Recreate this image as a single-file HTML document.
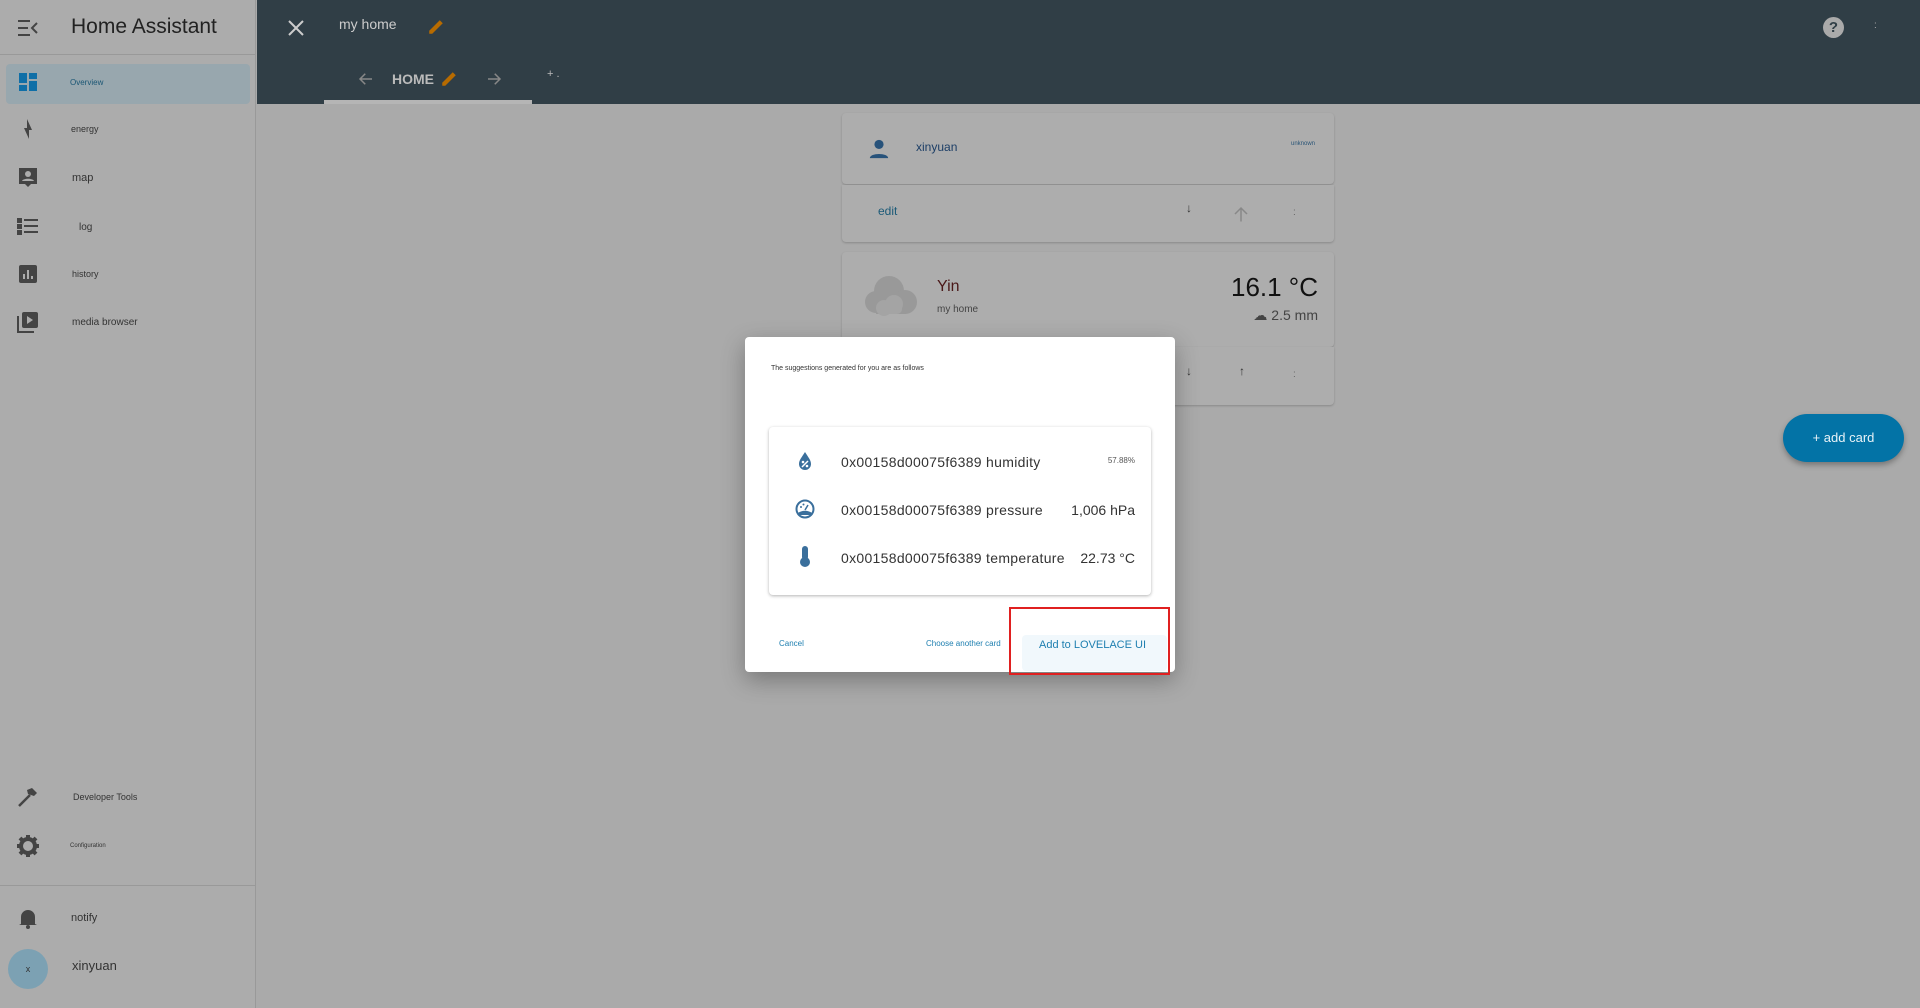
<!DOCTYPE html>
<html><head><meta charset="utf-8"><style>
*{box-sizing:border-box;margin:0;padding:0}
body{width:1920px;height:1008px;overflow:hidden;background:#aaaaaa;font-family:"Liberation Sans",sans-serif;position:relative}
.abs{position:absolute}
#side{left:0;top:0;width:256px;height:1008px;background:#acacac;border-right:1px solid #999}
.item{position:absolute;left:0;width:256px;height:48px;display:flex;align-items:center}
.item svg{position:absolute;left:16px}
.item span{position:absolute;left:72px;color:#333}
#top{left:257px;top:0;width:1663px;height:104px;background:#303e46}
.card{position:absolute;left:842px;width:492px;background:#adadad;border-radius:4px;box-shadow:0 1px 2px rgba(0,0,0,.2)}
</style></head><body>
<div id="side" class="abs">
  <svg class="abs" style="left:16px;top:18px" width="24" height="20" viewBox="0 0 24 20"><path d="M2 3h12M2 10h10M2 17h12" stroke="#444" stroke-width="2"/><path d="M21 5l-5 5 5 5" stroke="#444" stroke-width="2" fill="none"/></svg>
  <div class="abs" style="left:71px;top:15px;font-size:21px;color:#222">Home Assistant</div>
  <div class="abs" style="left:0;top:54px;width:256px;border-top:1px solid #999"></div>
  <div class="abs" style="left:6px;top:64px;width:244px;height:40px;background:#98a7ae;border-radius:4px"></div>
  <div class="item" style="top:58px"><svg width="24" height="24" viewBox="0 0 24 24" style="left:16px"><path d="M3 3h8v10H3zM13 3h8v6h-8zM13 11h8v10h-8zM3 15h8v6H3z" fill="#0f6fa7"/></svg><span style="font-size:8px;color:#1a5674;left:70px">Overview</span></div>
  <div class="item" style="top:105px"><svg width="24" height="24" viewBox="0 0 24 24"><path d="M11 2v9H8l5 11v-9h3z" fill="#444"/></svg><span style="font-size:9px;left:71px">energy</span></div>
  <div class="item" style="top:154px"><svg width="24" height="24" viewBox="0 0 24 24"><path d="M3 2h18v16h-6l-3 3-3-3H3z" fill="#444"/><circle cx="12" cy="8" r="3" fill="#acacac"/><path d="M6 15c1-3 11-3 12 0z" fill="#acacac"/></svg><span style="font-size:11px;left:72px">map</span></div>
  <div class="item" style="top:203px"><svg width="24" height="24" viewBox="0 0 24 24"><path d="M2 4h3v3H2zM2 10h3v3H2zM2 16h3v3H2zM8 5h14M8 11h14M8 17h14" stroke="#444" stroke-width="2" fill="#444"/></svg><span style="font-size:10px;left:79px">log</span></div>
  <div class="item" style="top:250px"><svg width="24" height="24" viewBox="0 0 24 24"><rect x="3" y="3" width="18" height="18" rx="2" fill="#444"/><path d="M8 17v-5M12 17V8M16 17v-3" stroke="#acacac" stroke-width="2"/></svg><span style="font-size:9px;left:72px">history</span></div>
  <div class="item" style="top:298px"><svg width="24" height="24" viewBox="0 0 24 24"><path d="M2 6v16h16" stroke="#444" stroke-width="2" fill="none"/><rect x="6" y="2" width="16" height="16" rx="2" fill="#444"/><path d="M11 6l6 4-6 4z" fill="#acacac"/></svg><span style="font-size:10px;left:72px">media browser</span></div>
  <div class="item" style="top:773px"><svg width="24" height="24" viewBox="0 0 24 24"><path d="M3 21L14 10" stroke="#444" stroke-width="2.5"/><path d="M11 5l5-2 5 5-3 3-3-1-3-1z" fill="#444"/></svg><span style="font-size:9px;left:73px">Developer Tools</span></div>
  <div class="item" style="top:822px"><svg width="24" height="24" viewBox="0 0 24 24"><circle cx="12" cy="12" r="7" fill="none" stroke="#444" stroke-width="4"/><path d="M12 1v5M12 18v5M1 12h5M18 12h5M4 4l4 4M16 16l4 4M4 20l4-4M16 8l4-4" stroke="#444" stroke-width="4"/></svg><span style="font-size:6px;left:70px">Configuration</span></div>
  <div class="abs" style="left:0;top:885px;width:256px;border-top:1px solid #999"></div>
  <div class="item" style="top:894px"><svg width="24" height="24" viewBox="0 0 24 24"><path d="M5 18V11a7 7 0 0114 0v7l2 1H3z" fill="#444"/><circle cx="12" cy="21" r="2" fill="#444"/></svg><span style="font-size:11px;left:71px">notify</span></div>
  <div class="abs" style="left:8px;top:949px;width:40px;height:40px;border-radius:50%;background:#7ca1b3;text-align:center;line-height:40px;font-size:9px;color:#333">x</div>
  <div class="abs" style="left:72px;top:958px;font-size:13px;color:#333">xinyuan</div>
</div>
<div id="top" class="abs">
  <svg class="abs" style="left:31px;top:20px" width="16" height="16" viewBox="0 0 16 16"><path d="M1 1l14 14M15 1L1 15" stroke="#ccc" stroke-width="2"/></svg>
  <div class="abs" style="left:82px;top:16px;font-size:14px;color:#ccc">my home</div>
  <svg class="abs" style="left:170px;top:18px" width="18" height="18" viewBox="0 0 24 24"><path d="M3 21v-4L17 3l4 4L7 21z" fill="#b76b00"/></svg>
  <div class="abs" style="left:67px;top:100px;width:208px;height:4px;background:#b5b5b5"></div>
  <svg class="abs" style="left:100px;top:70px" width="18" height="18" viewBox="0 0 24 24"><path d="M20 12H4M11 5l-7 7 7 7" stroke="#888" stroke-width="2" fill="none"/></svg>
  <div class="abs" style="left:135px;top:71px;font-size:14px;font-weight:bold;color:#bbb">HOME</div>
  <svg class="abs" style="left:183px;top:70px" width="18" height="18" viewBox="0 0 24 24"><path d="M3 21v-4L17 3l4 4L7 21z" fill="#b76b00"/></svg>
  <svg class="abs" style="left:228px;top:70px" width="18" height="18" viewBox="0 0 24 24"><path d="M4 12h16M13 5l7 7-7 7" stroke="#888" stroke-width="2" fill="none"/></svg>
  <div class="abs" style="left:290px;top:68px;font-size:11px;color:#bbb">+ .</div>
  <div class="abs" style="left:1566px;top:17px;width:21px;height:21px;border-radius:50%;background:#aaa;color:#303e46;font-weight:bold;font-size:15px;text-align:center;line-height:21px">?</div>
  <div class="abs" style="left:1617px;top:20px;font-size:10px;color:#aaa">:</div>
</div>
<div class="card" style="top:113px;height:71px">
  <svg class="abs" style="left:26px;top:25px" width="22" height="22" viewBox="0 0 24 24"><circle cx="12" cy="7" r="5" fill="#27527a"/><path d="M2 22c0-6 20-6 20 0z" fill="#27527a"/></svg>
  <div class="abs" style="left:74px;top:27px;font-size:12px;color:#1c3e66">xinyuan</div>
  <div class="abs" style="left:449px;top:28px;font-size:6px;color:#2a5577">unknown</div>
</div>
<div class="card" style="top:185px;height:57px;border-radius:0 0 4px 4px">
  <div class="abs" style="left:36px;top:19px;font-size:12px;color:#1b5a78">edit</div>
  <div class="abs" style="left:344px;top:16px;font-size:12px;color:#333">↓</div>
  <svg class="abs" style="left:390px;top:20px" width="18" height="18" viewBox="0 0 24 24"><path d="M12 22V4M4 12l8-8 8 8" stroke="#888" stroke-width="2" fill="none"/></svg>
  <div class="abs" style="left:451px;top:22px;font-size:10px;color:#666">:</div>
</div>
<div class="card" style="top:252px;height:95px">
  <svg class="abs" style="left:22px;top:20px" width="54" height="46" viewBox="0 0 54 46"><circle cx="25" cy="19" r="15" fill="#999"/><circle cx="12" cy="30" r="11" fill="#999"/><circle cx="41" cy="30" r="12" fill="#999"/><rect x="12" y="28" width="30" height="14" fill="#999"/><circle cx="20" cy="36" r="8" fill="#a4a4a4"/><circle cx="30" cy="32" r="9" fill="#a4a4a4"/><rect x="14" y="32" width="24" height="10" rx="5" fill="#a4a4a4"/></svg>
  <div class="abs" style="left:95px;top:26px;font-size:16px;color:#4a1818">Yin</div>
  <div class="abs" style="left:95px;top:52px;font-size:10px;color:#444">my home</div>
  <div class="abs" style="right:16px;top:20px;font-size:26px;color:#111">16.1 °C</div>
  <div class="abs" style="right:16px;top:55px;font-size:14px;color:#444">&#9729; 2.5 mm</div>
</div>
<div class="card" style="top:347px;height:58px;border-radius:0 0 4px 4px">
  <div class="abs" style="left:344px;top:17px;font-size:12px;color:#333">↓</div>
  <div class="abs" style="left:397px;top:17px;font-size:12px;color:#333">↑</div>
  <div class="abs" style="left:451px;top:22px;font-size:10px;color:#666">:</div>
</div>
<div class="abs" style="left:1783px;top:414px;width:121px;height:48px;border-radius:24px;background:#0373a6;box-shadow:0 3px 6px rgba(0,0,0,.3);color:#e8f2f7;font-size:13px;text-align:center;line-height:48px">+ add card</div>

<div class="abs" style="left:745px;top:337px;width:430px;height:335px;background:#fff;border-radius:4px;box-shadow:0 8px 24px rgba(0,0,0,.3)">
  <div class="abs" style="left:26px;top:28px;font-size:7px;color:#333">The suggestions generated for you are as follows</div>
  <div class="abs" style="left:24px;top:90px;width:382px;height:168px;border-radius:4px;box-shadow:0 1px 3px rgba(0,0,0,.3)">
    <svg class="abs" style="left:28px;top:25px" width="16" height="18" viewBox="0 0 16 18"><path d="M8 0C5 5 2 8 2 12a6 6 0 0012 0c0-4-3-7-6-12z" fill="#3a6f9c"/><path d="M5 15l6-6" stroke="#fff" stroke-width="1.5"/><circle cx="6" cy="10" r="1.3" fill="#fff"/><circle cx="10" cy="14" r="1.3" fill="#fff"/></svg>
    <div class="abs" style="left:72px;top:27px;font-size:14px;color:#333;letter-spacing:.3px">0x00158d00075f6389 humidity</div>
    <div class="abs" style="right:16px;top:29px;font-size:8px;color:#555">57.88%</div>
    <svg class="abs" style="left:26px;top:72px" width="20" height="20" viewBox="0 0 20 20"><circle cx="10" cy="10" r="8.5" fill="none" stroke="#3a6f9c" stroke-width="2"/><path d="M3 14c4-3 10-3 14 0v2H3z" fill="#3a6f9c"/><path d="M10 11l3-5" stroke="#3a6f9c" stroke-width="1.5"/><circle cx="6" cy="8" r="1" fill="#3a6f9c"/><circle cx="8.5" cy="5.5" r="1" fill="#3a6f9c"/></svg>
    <div class="abs" style="left:72px;top:75px;font-size:14px;color:#333;letter-spacing:.3px">0x00158d00075f6389 pressure</div>
    <div class="abs" style="right:16px;top:75px;font-size:14px;color:#333">1,006 hPa</div>
    <svg class="abs" style="left:29px;top:118px" width="14" height="22" viewBox="0 0 14 22"><rect x="4" y="1" width="6" height="14" rx="3" fill="#3a6f9c"/><circle cx="7" cy="17" r="5" fill="#3a6f9c"/></svg>
    <div class="abs" style="left:72px;top:123px;font-size:14px;color:#333;letter-spacing:.3px">0x00158d00075f6389 temperature</div>
    <div class="abs" style="right:16px;top:123px;font-size:14px;color:#333">22.73 °C</div>
  </div>
  <div class="abs" style="left:34px;top:302px;font-size:8px;color:#1e7fb0">Cancel</div>
  <div class="abs" style="left:181px;top:302px;font-size:8px;color:#1e7fb0">Choose another card</div>
  <div class="abs" style="left:277px;top:298px;width:145px;height:36px;background:#f1f8fc;border-radius:4px"></div>
  <div class="abs" style="left:294px;top:302px;font-size:11px;color:#1e7fb0">Add to LOVELACE UI</div>
</div>
<div class="abs" style="left:1009px;top:607px;width:161px;height:68px;border:2px solid #e02020"></div>
</body></html>
